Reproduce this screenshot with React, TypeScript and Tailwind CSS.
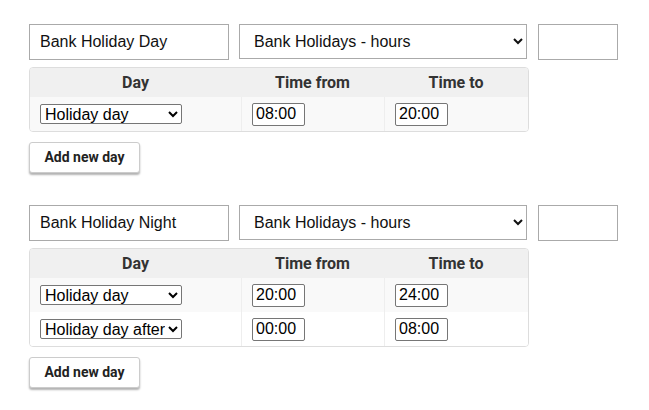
import React from "react";

type Row = { day: string; from: string; to: string };

const dayOptions = ["Holiday day", "Holiday day after", "Holiday day before"];

function Group({ name, rows }: { name: string; rows: Row[] }) {
  return (
    <div className="flex flex-col">
      <div className="flex items-start h-[36px]">
        <input
          defaultValue={name}
          className="w-[200px] h-[36px] border border-[#aaaaaa] pl-[10px] text-[16px] text-[#111] bg-white outline-none"
          style={{ fontFamily: '"Liberation Sans", Arial, sans-serif' }}
        />
        <select
          defaultValue="bh"
          className="ml-[10px] w-[288px] h-[35px] border border-[#aaaaaa] pl-[10px] pr-[2px] text-[16px] text-[#111] bg-white outline-none"
          style={{ fontFamily: '"Liberation Sans", Arial, sans-serif' }}
        >
          <option value="bh">Bank Holidays - hours</option>
        </select>
        <input className="ml-[11px] w-[80px] h-[36px] border border-[#aaaaaa] bg-white outline-none" />
      </div>
      <div className="mt-[7px] w-[500px] border border-[#dddddd] rounded-[4px] overflow-hidden">
        <div
          className="grid grid-cols-[211px_143px_1fr] h-[29px] bg-[#f0f0f0] text-[16px] font-bold text-[#333] items-center text-center"
          style={{ fontFamily: 'Roboto, "Liberation Sans", Arial, sans-serif' }}
        >
          <div>Day</div>
          <div>Time from</div>
          <div>Time to</div>
        </div>
        {rows.map((r, i) => (
          <div
            key={i}
            className={`grid grid-cols-[211px_143px_1fr] h-[34px] ${i % 2 === 0 ? "bg-[#f9f9f9]" : "bg-white"}`}
            style={{ fontFamily: '"Liberation Sans", Arial, sans-serif' }}
          >
            <div className="flex items-center pl-[10px]">
              <select
                defaultValue={r.day}
                className="w-[142px] h-[20px] border border-[#767676] rounded-[2px] pl-0 pr-0 text-[16px] text-black bg-white outline-none leading-none"
              >
                {dayOptions.map((o) => (
                  <option key={o} value={o}>
                    {o}
                  </option>
                ))}
              </select>
            </div>
            <div className="flex items-center pl-[10px] border-l border-[#eeeeee]">
              <input
                defaultValue={r.from}
                className="w-[53px] h-[23px] border border-[#767676] rounded-[2px] px-[3px] text-[16px] text-black bg-white outline-none"
              />
            </div>
            <div className="flex items-center pl-[10px] border-l border-[#eeeeee]">
              <input
                defaultValue={r.to}
                className="w-[53px] h-[23px] border border-[#767676] rounded-[2px] px-[3px] text-[16px] text-black bg-white outline-none"
              />
            </div>
          </div>
        ))}
      </div>
      <div className="mt-[10px]">
        <button
          className="w-[111px] h-[31px] border border-[#cccccc] rounded-[3px] bg-white text-[14px] font-bold text-[#222] shadow-[0_2px_2px_rgba(0,0,0,0.3)]"
          style={{ fontFamily: 'Roboto, "Liberation Sans", Arial, sans-serif' }}
        >
          Add new day
        </button>
      </div>
    </div>
  );
}

export default function App() {
  return (
    <div className="w-[649px] h-[410px] bg-white pl-[29px] pt-[24px] flex flex-col gap-[32px]">
      <Group name="Bank Holiday Day" rows={[{ day: "Holiday day", from: "08:00", to: "20:00" }]} />
      <Group
        name="Bank Holiday Night"
        rows={[
          { day: "Holiday day", from: "20:00", to: "24:00" },
          { day: "Holiday day after", from: "00:00", to: "08:00" },
        ]}
      />
    </div>
  );
}
